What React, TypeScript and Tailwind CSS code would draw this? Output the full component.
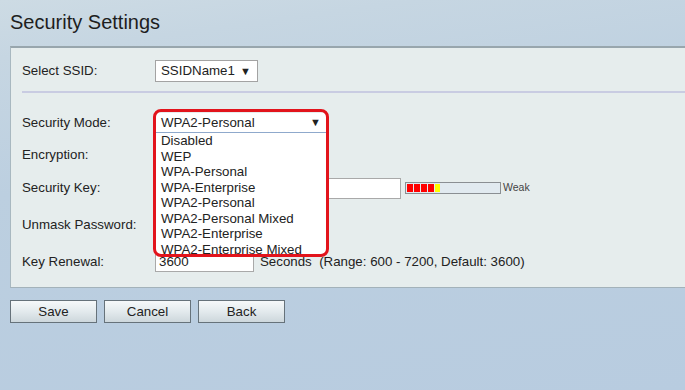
export default function App() {
  const options = [
    "Disabled",
    "WEP",
    "WPA-Personal",
    "WPA-Enterprise",
    "WPA2-Personal",
    "WPA2-Personal Mixed",
    "WPA2-Enterprise",
    "WPA2-Enterprise Mixed",
  ];
  return (
    <div className="w-[685px] h-[390px] overflow-hidden bg-[linear-gradient(172deg,#cddbe4_0%,#c6d6e2_12%,#bccfe0_40%,#b8cce0_100%)] font-['Liberation_Sans',Arial,sans-serif] text-[#222]">
      <div className="h-[46px] pl-[10px] pt-[10px] text-[20px] leading-[24px] text-[#1e1e1e]">
        Security Settings
      </div>
      <div className="ml-[10px] border-t-2 border-t-[#98a6ad] border-l border-l-[#a8b8c0] border-b border-b-[#a3b2ba] bg-[#e6eded] pl-[11px] pt-[8px] pb-[8px] text-[13.3px]">
        <div className="flex h-[30px] items-center">
          <div className="w-[133px]">Select SSID:</div>
          <div className="flex h-[22px] w-[103px] items-center justify-between border border-[#a3a3a3] bg-white pl-[5px] pr-[6px]">
            <span>SSIDName1</span>
            <span className="text-[11px]">▼</span>
          </div>
        </div>
        <div className="mt-[5px] h-[2px] bg-[#c9cce2]" />
        <div className="mt-[14px] flex h-[32px] items-center">
          <div className="w-[133px]">Security Mode:</div>
          <div className="relative z-10 h-[20px] w-[172px]">
            <div className="flex h-[20px] items-center justify-between border-b border-b-[#8fa9cc] bg-white pl-[6px] pr-[6px]">
              <span>WPA2-Personal</span>
              <span className="text-[11px]">▼</span>
            </div>
            <div className="absolute left-0 top-[20px] h-[122px] w-full overflow-hidden bg-white pl-[6px] leading-[15.5px]">
              {options.map((o) => (
                <div key={o} className="whitespace-nowrap">
                  {o}
                </div>
              ))}
            </div>
            <div className="pointer-events-none absolute left-[-2px] top-[-4px] h-[148px] w-[176px] rounded-[8px] border-[3px] border-[#e2141c]" />
          </div>
        </div>
        <div className="flex h-[32px] items-center">
          <div className="w-[133px]">Encryption:</div>
        </div>
        <div className="flex h-[34px] items-center">
          <div className="w-[133px]">Security Key:</div>
          <div className="h-[21px] w-[246px] border border-[#a9a9a9] bg-white" />
          <div className="ml-[4px] flex h-[12px] w-[96px] items-center gap-[1px] border border-[#8a8f93] bg-[#e1eaf0] px-[1px]">
            <div className="h-[8px] w-[6px] bg-[#ff0000]" />
            <div className="h-[8px] w-[6px] bg-[#ff0000]" />
            <div className="h-[8px] w-[6px] bg-[#ff0000]" />
            <div className="h-[8px] w-[6px] bg-[#ff0000]" />
            <div className="h-[8px] w-[5px] bg-[#ffff00]" />
          </div>
          <span className="ml-[2px] text-[10.5px] text-[#444]">Weak</span>
        </div>
        <div className="flex h-[40px] items-center">
          <div className="w-[133px]">Unmask Password:</div>
        </div>
        <div className="flex h-[34px] items-center">
          <div className="w-[133px]">Key Renewal:</div>
          <div className="flex h-[20px] w-[99px] items-center border border-[#a9a9a9] bg-white pl-[3px]">
            3600
          </div>
          <span className="ml-[6px] whitespace-pre">Seconds  (Range: 600 - 7200, Default: 3600)</span>
        </div>
      </div>
      <div className="ml-[10px] mt-[12px] flex gap-[7px] text-[13.3px]">
        {["Save", "Cancel", "Back"].map((b) => (
          <div
            key={b}
            className="flex h-[23px] w-[87px] items-center justify-center border border-[#66727a] bg-[linear-gradient(180deg,#f6f9fa_0%,#e3eaed_50%,#cdd7dc_100%)] text-[#222]"
          >
            {b}
          </div>
        ))}
      </div>
    </div>
  );
}
